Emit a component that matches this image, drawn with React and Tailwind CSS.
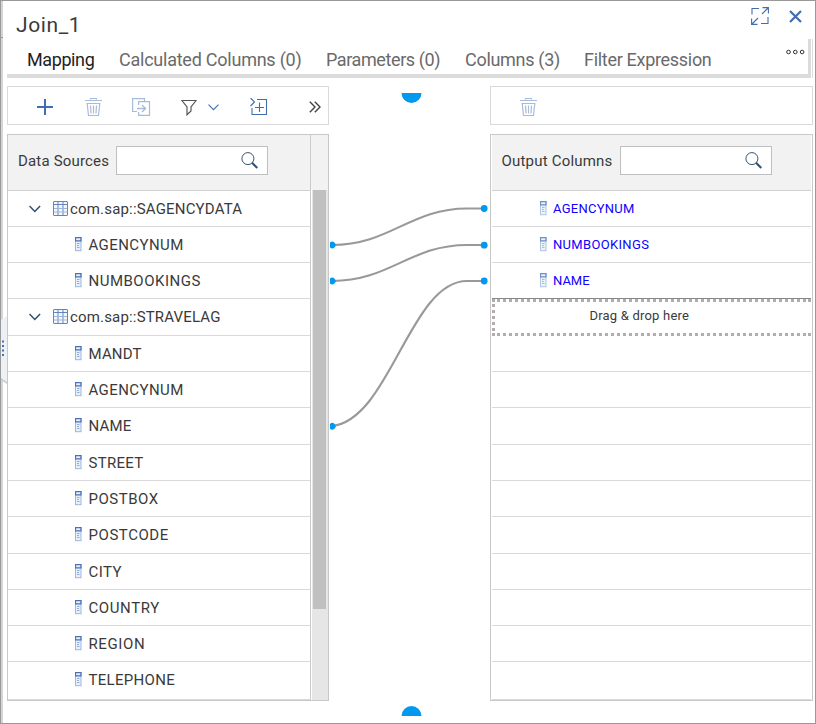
const sourceRows = [
  { label: "com.sap::SAGENCYDATA", table: true, h: "h-[36px]", ls: "tracking-[0.18px]" },
  { label: "AGENCYNUM", h: "h-[36px]", ls: "tracking-[0.42px]" },
  { label: "NUMBOOKINGS", h: "h-[36px]", ls: "tracking-[0.5px]" },
  { label: "com.sap::STRAVELAG", table: true, h: "h-[37px]", ls: "tracking-[0.17px]" },
  { label: "MANDT", h: "h-[36px]", ls: "tracking-[0.15px]" },
  { label: "AGENCYNUM", h: "h-[36px]", ls: "tracking-[0.42px]" },
  { label: "NAME", h: "h-[37px]", ls: "tracking-[0.15px]" },
  { label: "STREET", h: "h-[36px]", ls: "tracking-[0.3px]" },
  { label: "POSTBOX", h: "h-[36px]", ls: "tracking-[0.5px]" },
  { label: "POSTCODE", h: "h-[37px]", ls: "tracking-[0.55px]" },
  { label: "CITY", h: "h-[36px]", ls: "tracking-[0.4px]" },
  { label: "COUNTRY", h: "h-[36px]", ls: "tracking-[0.6px]" },
  { label: "REGION", h: "h-[36px]", ls: "tracking-[0.6px]" },
  { label: "TELEPHONE", h: "h-[38px]", ls: "tracking-[0.3px]" },
];

const outputRows = [
  { label: "AGENCYNUM", h: "h-[36px]", ls: "tracking-[0.27px]" },
  { label: "NUMBOOKINGS", h: "h-[36px]", ls: "tracking-[0.33px]" },
  { label: "NAME", h: "h-[35px]", ls: "tracking-normal" },
];

const emptyRows = ["h-[36px]", "h-[36px]", "h-[37px]", "h-[36px]", "h-[36px]", "h-[37px]", "h-[36px]", "h-[36px]", "h-[36px]", "h-[38px]"];

function TrashIcon() {
  return (
    <svg width="17" height="19" viewBox="0 0 17 19" fill="none" stroke="#a9bbdb">
      <path d="M0 2.5H17M5.5 1.5V.5H11.5V1.5" strokeWidth="1.2" />
      <path d="M1.5 5.5H15.5M2.2 5.5L3.5 17.5H13.5L14.8 5.5" strokeWidth="1.2" />
      <path d="M5.5 7.5L6 15.5M8.5 7.5V15.5M11.5 7.5L11 15.5" strokeWidth="1.2" />
    </svg>
  );
}

function CopyIcon() {
  return (
    <svg width="19" height="18" viewBox="0 0 19 18" fill="none" stroke="#a9bbdb" strokeWidth="1.2">
      <path d="M5 13.5H.6V.6H12.5V3" />
      <path d="M6.6 7V3.6H17.5V17.4H6.6V14" />
      <path d="M5 10.5H13.5M10 7L13.5 10.5L10 14" strokeWidth="1.4" />
    </svg>
  );
}

function ColumnIcon({ soft }) {
  return (
    <svg width="7" height="15" viewBox="0 0 7 15" fill="none" className={soft ? "-mt-px opacity-80" : ""}>
      <rect x=".5" y=".5" width="5.5" height="13.2" fill="#e6effa" stroke="#9db6e0" />
      <path d="M.5 0V4.4M6 0V4.4M0 .7H6.5M0 3.9H6.5" stroke="#4a72b8" strokeWidth="1.2" />
      <path d="M2 6.5H4.5M2 8.5H4M2 10.5H4.5" stroke="#93aedb" />
    </svg>
  );
}

function TableIcon() {
  return (
    <svg width="15" height="15" viewBox="0 0 15 15" fill="none">
      <rect x=".5" y=".5" width="14" height="14" rx=".5" fill="#f3f8fd" stroke="#6485bf" />
      <path d="M0 3.5H15M5 0V15M10 0V15" stroke="#6485bf" />
      <path d="M1 7.5H14M1 11H14" stroke="#9fb6dc" />
    </svg>
  );
}

function Chevron() {
  return (
    <svg width="12" height="8" viewBox="0 0 12 8" fill="none" stroke="#2f4f6e" strokeWidth="1.5">
      <path d="M.5 1L5.8 6.5L11.1 1" />
    </svg>
  );
}

function SearchBox() {
  return (
    <div className="flex h-[29px] w-[152px] items-center justify-end border border-[#bfbfbf] bg-white pr-[9px]">
      <svg width="17" height="17" viewBox="0 0 17 17" fill="none" stroke="#34526f">
        <circle cx="6.9" cy="6.6" r="6" strokeWidth="1" />
        <path d="M11 10.7L16.3 16" strokeWidth="2.2" />
      </svg>
    </div>
  );
}

function Links() {
  return (
    <svg width="161" height="637" viewBox="329 86 161 637" className="block shrink-0" fill="none">
      <path d="M401.5 93H421.5A10 10 0 0 1 401.5 93Z" fill="#0099ee" />
      <path d="M401.5 716H421.5A10 10 0 0 0 401.5 716Z" fill="#0099ee" />
      <g stroke="#999" strokeWidth="2.1">
        <path d="M332 245C390 245 410 208.5 467 208.5H484" />
        <path d="M332 281C390 281 410 245 467 245H484" />
        <path d="M332 426C390 420 410 281 467 281H484" />
      </g>
      <g fill="#0099ee">
        <path d="M330 242.6A3.3 3.3 0 1 1 330 247.4ZM330 278.6A3.3 3.3 0 1 1 330 283.4ZM330 423.9A3.3 3.3 0 1 1 330 428.7Z" />
        <circle cx="484.2" cy="208.5" r="3.4" />
        <circle cx="484.2" cy="245.2" r="3.4" />
        <circle cx="484.2" cy="281" r="3.4" />
      </g>
    </svg>
  );
}

export default function App() {
  return (
    <div className="relative flex h-[724px] w-[816px] flex-col overflow-hidden border border-[#999] bg-white font-['Roboto','Liberation_Sans',sans-serif] text-[#3a3a3a]">
      <div className="absolute left-0 top-0 h-full w-[2px] bg-[#d5d5d5]" />
      <div className="absolute left-0 top-[36px] h-px w-[2px] bg-[#999]" />
      <svg className="absolute left-0 top-[315px]" width="6" height="68" viewBox="0 0 6 68">
        <path d="M0 4L6 0V66L0 62Z" fill="#edf0f4" />
        <path d="M0 62L6 66V68L0 64Z" fill="#ccc" />
        <path d="M1 24.5H3V26.5H1ZM1 29H3V31H1ZM1 33.5H3V35.5H1ZM1 38H3V40H1Z" fill="#4470b4" />
      </svg>

      <header className="flex h-[38px] shrink-0 items-start justify-between pl-[15px] pr-[13px]">
        <h1 className="pt-[10px] text-[21px] leading-[28px] tracking-[0.6px]">Join_1</h1>
        <div className="flex items-center gap-[20px] pt-[6px]">
          <svg width="18" height="18" viewBox="0 0 18 18" fill="none" stroke="#426db0" strokeWidth="1.1">
            <path d="M1 7.5V1.5H8M17 10V16.5H10" />
            <path d="M11.5 .6H17.4V6.5M17 1L11 7M.6 11.5V17.4H6.5M1 17L7 11" />
          </svg>
          <svg width="13" height="13" viewBox="0 0 13 13" fill="none" stroke="#426db0" strokeWidth="2.2">
            <path d="M1 1L12 12M12 1L1 12" />
          </svg>
        </div>
      </header>

      <div className="ml-[6px] flex h-[39px] w-[806px] shrink-0 border-r border-[#ddd]">
        <nav className="flex h-[39px] w-[804px] items-start border-b-4 border-r-[3px] border-[#dcdcdc] pl-[20px] text-[18px] leading-[24px] tracking-[-0.24px] text-[#6a6a6a]">
          <span className="w-[92px] pt-[9px] tracking-[-0.4px] text-[#222]">Mapping</span>
          <span className="w-[207px] pt-[9px]">Calculated Columns (0)</span>
          <span className="w-[139px] pt-[9px] tracking-[-0.4px]">Parameters (0)</span>
          <span className="w-[119px] pt-[9px] tracking-[-0.3px]">Columns (3)</span>
          <span className="w-[201px] pt-[9px] tracking-[-0.3px]">Filter Expression</span>
          <svg width="20" height="6" viewBox="0 0 20 6" fill="none" stroke="#333" className="mt-[10px] shrink-0">
            <circle cx="3.5" cy="3" r="1.8" />
            <circle cx="10.3" cy="3" r="1.8" />
            <circle cx="17.1" cy="3" r="1.8" />
          </svg>
        </nav>
      </div>

      <main className="ml-[6px] mt-[8px] flex h-[637px]">
        <section className="flex w-[322px] shrink-0 flex-col">
          <div className="flex h-[39px] items-center border border-[#d9d9d9] pl-[29px]">
            <svg width="16" height="16" viewBox="0 0 16 16" stroke="#426db0" strokeWidth="2" className="mt-[3px]">
              <path d="M0 8H16M8 0V16" />
            </svg>
            <span className="ml-[32px] mt-[3px]"><TrashIcon /></span>
            <span className="ml-[30px] mt-[3px]"><CopyIcon /></span>
            <svg width="16" height="17" viewBox="0 0 16 17" fill="none" stroke="#555" strokeWidth="1.2" className="ml-[30px] mt-[3px]">
              <path d="M.9 1.5H15.1L10 8V12L6 15.8V8Z" />
            </svg>
            <svg width="11" height="7" viewBox="0 0 11 7" fill="none" stroke="#426db0" strokeWidth="1.1" className="ml-[11px] mt-[3px]">
              <path d="M.5 .7L5.5 5.7L10.5 .7" />
            </svg>
            <svg width="18" height="18" viewBox="0 0 18 18" fill="none" stroke="#426db0" strokeWidth="1.1" className="ml-[31px] mt-[2px]">
              <path d="M.5 0L4.5 4L.5 8M7 1.5H16.5V16.5H2V10M9.5 4.5V14M5 9.5H14" />
            </svg>
            <svg width="12" height="12" viewBox="0 0 12 12" fill="none" stroke="#444" strokeWidth="1.4" className="ml-[41px] mt-[3px]">
              <path d="M.8 .7L6 6L.8 11.3M5.8 .7L11 6L5.8 11.3" />
            </svg>
          </div>

          <div className="mt-[9px] flex h-[567px] border border-[#c8c8c8]">
            <div className="flex w-[303px] shrink-0 flex-col border-r border-[#ccc]">
              <div className="flex h-[56px] shrink-0 items-start border-b border-[#d0d0d0] bg-[#f2f2f2] pl-[10px] pt-[11px]">
                <span className="w-[98px] whitespace-nowrap text-[15px] leading-[30px] tracking-[0.17px]">Data Sources</span>
                <SearchBox />
              </div>
              {sourceRows.map((r, i) => (
                <div key={i} className={`shrink-0 border-b border-[#d9d9d9] ${r.h}`}>
                  {r.table ? (
                    <div className="flex h-[35px] items-center pl-[21px]">
                      <Chevron />
                      <span className="-mt-px ml-[12px]"><TableIcon /></span>
                      <span className={`ml-[2px] pt-px text-[15px] leading-[22px] ${r.ls}`}>{r.label}</span>
                    </div>
                  ) : (
                    <div className="flex h-[35px] items-center pl-[67px]">
                      <ColumnIcon />
                      <span className={`ml-[6.5px] pt-px text-[15px] leading-[22px] ${r.ls}`}>{r.label}</span>
                    </div>
                  )}
                </div>
              ))}
            </div>
            <div className="flex w-[17px] flex-col">
              <div className="h-[55px] bg-[#f2f2f2]" />
              <div className="ml-px flex-1 bg-[#e6e6e6] pl-px">
                <div className="h-[419px] w-[13px] bg-[#c0c0c0]" />
              </div>
            </div>
          </div>
        </section>

        <Links />

        <section className="flex w-[323px] shrink-0 flex-col">
          <div className="flex h-[39px] items-center border border-[#d9d9d9] pl-[29px]">
            <span className="mt-[3px]"><TrashIcon /></span>
          </div>
          <div className="mt-[9px] flex h-[567px] flex-col border border-[#c8c8c8] px-px">
            <div className="flex h-[56px] shrink-0 items-start border-b border-[#d0d0d0] bg-[#f2f2f2] pl-[9.5px] pt-[11px]">
              <span className="w-[118.5px] whitespace-nowrap text-[15px] leading-[30px] tracking-[0.2px]">Output Columns</span>
              <SearchBox />
            </div>
            {outputRows.map((r, i) => (
              <div key={i} className={`flex shrink-0 items-center pl-[48px] ${r.h} ${i < 2 ? "border-b border-[#d9d9d9]" : ""}`}>
                <ColumnIcon soft />
                <span className={`ml-[6px] text-[13px] text-[#1000ff] ${r.ls}`}>{r.label}</span>
              </div>
            ))}
            <div className="h-[38px] shrink-0 border-t border-[#888]">
              <div className="flex h-[37px] items-start border-y-[3px] border-l-[3px] border-dotted border-[#b3acac] pl-[94.5px] pt-[4px] text-[13px] leading-[20px] tracking-[0.2px]">
                Drag &amp; drop here
              </div>
            </div>
            {emptyRows.map((h, i) => (
              <div key={i} className={`shrink-0 border-b border-[#d9d9d9] ${h}`} />
            ))}
          </div>
        </section>
      </main>
    </div>
  );
}
